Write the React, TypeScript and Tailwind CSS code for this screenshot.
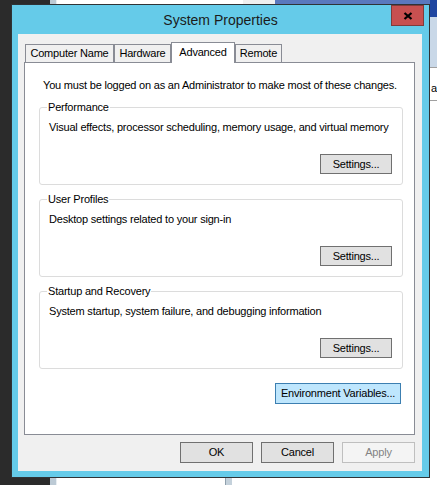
import React from 'react';

// Classic Windows 8 "System Properties" dialog sitting on a busy desktop.

const btn =
  'flex items-center justify-center border text-[11px] leading-none tracking-[-0.2px] text-black';

function PushButton({
  label,
  className = '',
}: {
  label: string;
  className?: string;
}) {
  return (
    <button type="button" className={`${btn} ${className}`}>
      {label}
    </button>
  );
}

function Group({
  title,
  text,
  className = '',
}: {
  title: string;
  text: string;
  className?: string;
}) {
  return (
    <fieldset
      className={`ml-[14px] w-[364px] rounded-[3px] border border-[#dcdcdc] pl-[9px] pr-[10px] pb-[10px] ${className}`}
    >
      <legend className="-ml-[2px] px-[1px] text-[11px] leading-[13px] tracking-[-0.2px]">
        {title}
      </legend>
      <p className="mt-[7px] text-[11px] leading-[13px] tracking-[-0.2px]">{text}</p>
      <div className="mt-[20px] flex justify-end">
        <PushButton
          label="Settings..."
          className="h-[20px] w-[72px] border-[#707070] bg-[#e1e1e1]"
        />
      </div>
    </fieldset>
  );
}

const tabs = [
  { name: 'Computer Name', w: 'w-[89px]' },
  { name: 'Hardware', w: 'w-[57px]' },
  { name: 'Advanced', w: 'w-[64px]', active: true },
  { name: 'Remote', w: 'w-[47px]' },
];

function Desktop() {
  return (
    <>
      {/* left taskbar-ish dark column */}
      <div className="absolute left-0 top-0 h-[485px] w-[50px] bg-[#2b2b2b]" />
      <div className="absolute left-[50px] top-0 h-[485px] w-[7px] border-r border-r-[#e8eef2] bg-[#bccad5]" />
      {/* windows peeking out above and below */}
      <div className="absolute left-[243px] top-0 h-[4px] w-[32px] bg-[#efefef]" />
      <div className="absolute left-[275px] top-0 h-[4px] w-[162px] bg-[#5a78bd]" />
      <div className="absolute left-[430px] top-0 h-[17px] w-[7px] bg-[#1f46a0]" />
      <div className="absolute left-[430px] top-[17px] h-[50px] w-[7px] bg-[#c9d8e8]" />
      <div className="absolute left-[430px] top-[67px] h-[34px] w-[7px] overflow-hidden border-y border-[#a0a0a0] bg-white">
        <span className="block pl-[1px] pt-[14px] text-[11px] leading-[13px]">a</span>
      </div>
      <div className="absolute left-[225px] top-[478px] h-[7px] w-[7px] border-l border-l-[#8fa0ad] bg-[#c4d1db]" />
    </>
  );
}

export default function App() {
  return (
    <div className="relative h-[485px] w-[437px] overflow-hidden bg-white font-[Liberation_Sans,Arial,sans-serif] text-black">
      <Desktop />

      <div className="absolute left-[11px] top-[4px] flex h-[474px] w-[419px] flex-col border border-[#2f3336] bg-[#65cbe9]">
        {/* title bar */}
        <div className="relative flex h-[29px] items-center justify-center">
          <span className="text-[14px] leading-none text-[#1b1b1b]">System Properties</span>
          <div className="absolute right-[5px] top-0 flex h-[21px] w-[33px] items-center justify-center border border-[#803b3b] bg-[#c75050]">
            <svg width="10" height="8" viewBox="0 0 10 8">
              <path d="M1.5 1 L8.5 7 M8.5 1 L1.5 7" stroke="#000" strokeWidth="2.2" />
            </svg>
          </div>
        </div>

        {/* client area */}
        <div className="ml-[6px] mr-[7px] flex h-[437px] flex-col bg-[#f0f0f0] pt-[8px]">
          <div className="ml-[7px] flex h-[20px] items-end">
            {tabs.map((t) =>
              t.active ? (
                <div
                  key={t.name}
                  className={`relative z-10 -mb-px flex h-[21px] items-center justify-center border border-b-0 border-[#898c95] bg-white pb-[1px] text-[11px] tracking-[-0.2px] ${t.w}`}
                >
                  {t.name}
                </div>
              ) : (
                <div
                  key={t.name}
                  className={`flex h-[18px] items-center justify-center border border-b-0 border-[#898c95] bg-[#f0f0f0] text-[11px] tracking-[-0.2px] ${t.w}`}
                >
                  {t.name}
                </div>
              )
            )}
          </div>

          <div className="ml-[6px] flex h-[373px] w-[391px] flex-col border border-[#898c95] bg-white">
            <p className="ml-[18px] mt-[16px] text-[11px] leading-[13px] tracking-[-0.2px]">
              You must be logged on as an Administrator to make most of these changes.
            </p>
            <Group
              className="mt-[9px]"
              title="Performance"
              text="Visual effects, processor scheduling, memory usage, and virtual memory"
            />
            <Group
              className="mt-[8px]"
              title="User Profiles"
              text="Desktop settings related to your sign-in"
            />
            <Group
              className="mt-[8px]"
              title="Startup and Recovery"
              text="System startup, system failure, and debugging information"
            />
            <div className="mr-[13px] mt-[14px] flex justify-end">
              <PushButton
                label="Environment Variables..."
                className="h-[21px] w-[126px] border-[#3c7fb1] bg-[#bee6fd]"
              />
            </div>
          </div>

          <div className="mr-[7px] mt-[7px] flex justify-end gap-[8px]">
            <PushButton label="OK" className="h-[21px] w-[73px] border-[#707070] bg-[#e1e1e1]" />
            <PushButton label="Cancel" className="h-[21px] w-[73px] border-[#707070] bg-[#e1e1e1]" />
            <PushButton
              label="Apply"
              className="h-[21px] w-[73px] border-[#bfbfbf] bg-[#f4f4f4] !text-[#838383]"
            />
          </div>
        </div>
      </div>
    </div>
  );
}
